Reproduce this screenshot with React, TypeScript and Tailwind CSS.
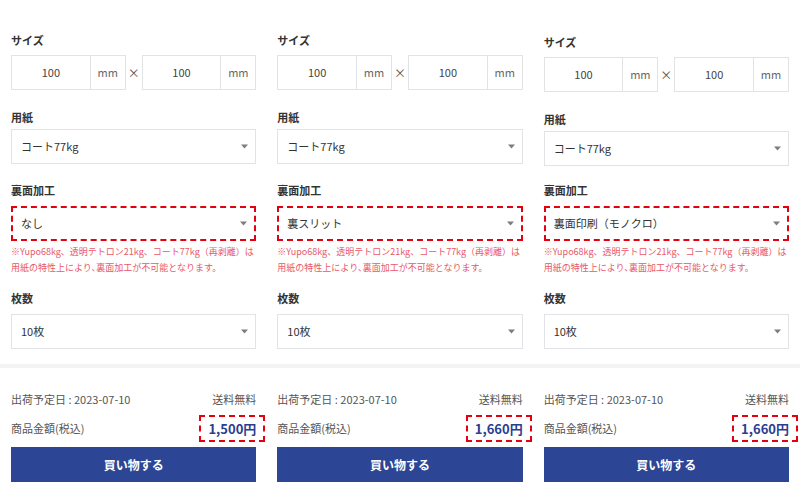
import clsx from "clsx";

type Col = { option: string; price: string; shifted?: boolean };

const columns: Col[] = [
  { option: "なし", price: "1,500円" },
  { option: "裏スリット", price: "1,660円" },
  { option: "裏面印刷（モノクロ）", price: "1,660円", shifted: true },
];

function Caret() {
  return (
    <svg width="7" height="5" viewBox="0 0 7 5" className="shrink-0">
      <path d="M0 0.5h7L3.5 4.5z" fill="#7d7d7d" />
    </svg>
  );
}

function Label({ children, className }: { children: React.ReactNode; className?: string }) {
  return <div className={clsx("h-4 text-[11px] leading-4 font-bold text-[#333]", className)}>{children}</div>;
}

function Select({ value, dashed, className }: { value: string; dashed?: boolean; className?: string }) {
  return (
    <div
      className={clsx(
        "flex h-[35px] items-center justify-between bg-white pr-[7px] text-[11px] text-[#333]",
        dashed ? "border-2 border-dashed border-[#e3000f] pl-[8px]" : "border border-[#e1e3e6] pl-[9px]",
        className,
      )}
    >
      <span>{value}</span>
      <Caret />
    </div>
  );
}

function SizeInput() {
  return (
    <div className="flex h-full flex-1 border border-[#e1e3e6] bg-white text-[11px]">
      <div className="flex flex-1 items-center justify-center text-[#444]">100</div>
      <div className="flex w-[35px] items-center justify-center border-l border-[#e1e3e6] text-[#666]">mm</div>
    </div>
  );
}

function OptionsColumn({ col }: { col: Col }) {
  return (
    <div className={clsx("flex flex-col", col.shifted && "pt-[2px]")}>
      <Label>サイズ</Label>
      <div className="mt-[7px] flex h-[35px] items-center">
        <SizeInput />
        <span className="w-[16px] text-center text-[12px] text-[#555]">×</span>
        <SizeInput />
      </div>

      <Label className="mt-[19px]">用紙</Label>
      <Select value="コート77kg" className="mt-[4px]" />

      <Label className={col.shifted ? "mt-[16px]" : "mt-[18px]"}>裏面加工</Label>
      <Select value={col.option} dashed className="mt-[8px]" />
      <p className="mt-[3px] text-[9px] leading-4 whitespace-nowrap text-[#e8586a]">
        ※Yupo68kg、透明テトロン21kg、コート77kg（再剥離）は
        <br />
        用紙の特性上により､裏面加工が不可能となります。
      </p>

      <Label className="mt-[14px]">枚数</Label>
      <Select value="10枚" className="mt-[8px]" />
    </div>
  );
}

function OrderColumn({ col }: { col: Col }) {
  return (
    <div className="flex flex-col">
      <div className="flex h-4 items-center justify-between text-[11px] leading-4 text-[#555]">
        <span>出荷予定日 : 2023-07-10</span>
        <span>送料無料</span>
      </div>
      <div className="mt-[8px] flex h-[27px] items-center justify-between">
        <span className="text-[11px] text-[#555]">商品金額(税込)</span>
        <span className="-mr-[9px] inline-flex h-[27px] items-center border-2 border-dashed border-[#e3000f] px-[7px] text-[13px] font-bold text-[#2a3d8f]">
          {col.price}
        </span>
      </div>
      <button className="mt-[5px] h-[35px] w-full bg-[#2c4594] text-[12px] font-bold text-white">買い物する</button>
    </div>
  );
}

export default function App() {
  return (
    <div className="h-[500px] w-[800px] overflow-hidden bg-white font-['Noto_Sans_CJK_JP','Noto_Sans',sans-serif]">
      <div className="grid grid-cols-3 gap-x-[21px] px-[11px] pt-[32px]">
        {columns.map((c, i) => (
          <OptionsColumn key={i} col={c} />
        ))}
      </div>

      <div className="mt-[15px] h-[4px] bg-[#f3f3f4]" />

      <div className="mt-[23px] grid grid-cols-3 gap-x-[21px] px-[11px]">
        {columns.map((c, i) => (
          <OrderColumn key={i} col={c} />
        ))}
      </div>
    </div>
  );
}
